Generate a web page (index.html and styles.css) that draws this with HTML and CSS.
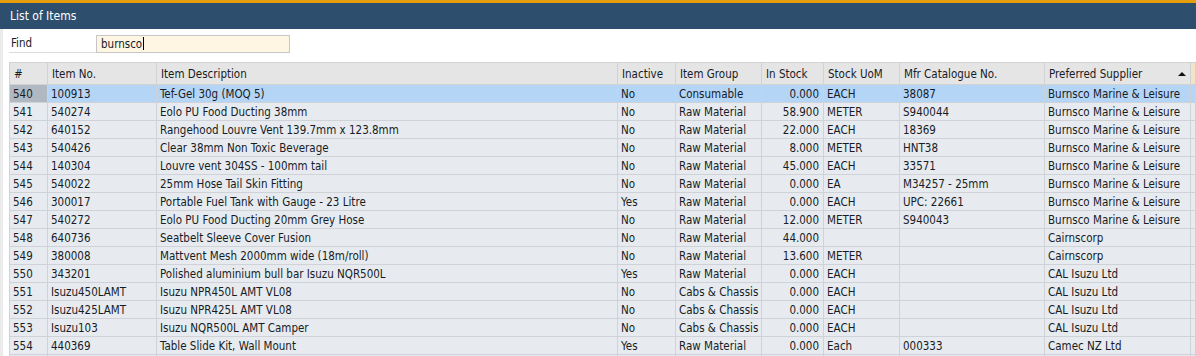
FILE: index.html
```html
<!DOCTYPE html>
<html lang="en">
<head>
    <meta charset="UTF-8">
    <title>List of Items</title>
    <link rel="stylesheet" href="styles.css">
</head>
<body>
    <div class="window">
        <div class="accent"></div>
        <div class="titlebar">List of Items</div>

        <div class="content">
            <div class="find-row">
                <label class="find-label" for="find">Find</label>
                <div class="find-input" id="find">burnsco<span class="caret"></span></div>
            </div>

            <table class="grid">
                <colgroup>
                    <col style="width: 38px">
                    <col style="width: 109px">
                    <col style="width: 461px">
                    <col style="width: 58px">
                    <col style="width: 86px">
                    <col style="width: 62px">
                    <col style="width: 76px">
                    <col style="width: 145px">
                    <col style="width: 146px">
                    <col>
                </colgroup>
                <thead>
                    <tr>
                        <th>#</th>
                        <th>Item No.</th>
                        <th>Item Description</th>
                        <th>Inactive</th>
                        <th>Item Group</th>
                        <th>In Stock</th>
                        <th>Stock UoM</th>
                        <th>Mfr Catalogue No.</th>
                        <th class="sorted">Preferred Supplier<span class="sort-arrow"></span></th>
                        <th class="extra"></th>
                    </tr>
                </thead>
                <tbody>
                    <tr class="selected">
                        <td class="num">540</td><td>100913</td><td>Tef-Gel 30g (MOQ 5)</td><td>No</td><td>Consumable</td><td class="qty">0.000</td><td>EACH</td><td>38087</td><td>Burnsco Marine &amp; Leisure</td><td></td>
                    </tr>
                    <tr>
                        <td class="num">541</td><td>540274</td><td>Eolo PU Food Ducting 38mm</td><td>No</td><td>Raw Material</td><td class="qty">58.900</td><td>METER</td><td>S940044</td><td>Burnsco Marine &amp; Leisure</td><td></td>
                    </tr>
                    <tr>
                        <td class="num">542</td><td>640152</td><td>Rangehood Louvre Vent 139.7mm x 123.8mm</td><td>No</td><td>Raw Material</td><td class="qty">22.000</td><td>EACH</td><td>18369</td><td>Burnsco Marine &amp; Leisure</td><td></td>
                    </tr>
                    <tr>
                        <td class="num">543</td><td>540426</td><td>Clear 38mm Non Toxic Beverage</td><td>No</td><td>Raw Material</td><td class="qty">8.000</td><td>METER</td><td>HNT38</td><td>Burnsco Marine &amp; Leisure</td><td></td>
                    </tr>
                    <tr>
                        <td class="num">544</td><td>140304</td><td>Louvre vent 304SS - 100mm tail</td><td>No</td><td>Raw Material</td><td class="qty">45.000</td><td>EACH</td><td>33571</td><td>Burnsco Marine &amp; Leisure</td><td></td>
                    </tr>
                    <tr>
                        <td class="num">545</td><td>540022</td><td>25mm Hose Tail Skin Fitting</td><td>No</td><td>Raw Material</td><td class="qty">0.000</td><td>EA</td><td>M34257 - 25mm</td><td>Burnsco Marine &amp; Leisure</td><td></td>
                    </tr>
                    <tr>
                        <td class="num">546</td><td>300017</td><td>Portable Fuel Tank with Gauge - 23 Litre</td><td>Yes</td><td>Raw Material</td><td class="qty">0.000</td><td>EACH</td><td>UPC: 22661</td><td>Burnsco Marine &amp; Leisure</td><td></td>
                    </tr>
                    <tr>
                        <td class="num">547</td><td>540272</td><td>Eolo PU Food Ducting 20mm Grey Hose</td><td>No</td><td>Raw Material</td><td class="qty">12.000</td><td>METER</td><td>S940043</td><td>Burnsco Marine &amp; Leisure</td><td></td>
                    </tr>
                    <tr>
                        <td class="num">548</td><td>640736</td><td>Seatbelt Sleeve Cover Fusion</td><td>No</td><td>Raw Material</td><td class="qty">44.000</td><td></td><td></td><td>Cairnscorp</td><td></td>
                    </tr>
                    <tr>
                        <td class="num">549</td><td>380008</td><td>Mattvent Mesh 2000mm wide (18m/roll)</td><td>No</td><td>Raw Material</td><td class="qty">13.600</td><td>METER</td><td></td><td>Cairnscorp</td><td></td>
                    </tr>
                    <tr>
                        <td class="num">550</td><td>343201</td><td>Polished aluminium bull bar Isuzu NQR500L</td><td>Yes</td><td>Raw Material</td><td class="qty">0.000</td><td>EACH</td><td></td><td>CAL Isuzu Ltd</td><td></td>
                    </tr>
                    <tr>
                        <td class="num">551</td><td>Isuzu450LAMT</td><td>Isuzu NPR450L AMT VL08</td><td>No</td><td>Cabs &amp; Chassis</td><td class="qty">0.000</td><td>EACH</td><td></td><td>CAL Isuzu Ltd</td><td></td>
                    </tr>
                    <tr>
                        <td class="num">552</td><td>Isuzu425LAMT</td><td>Isuzu NPR425L AMT VL08</td><td>No</td><td>Cabs &amp; Chassis</td><td class="qty">0.000</td><td>EACH</td><td></td><td>CAL Isuzu Ltd</td><td></td>
                    </tr>
                    <tr>
                        <td class="num">553</td><td>Isuzu103</td><td>Isuzu NQR500L AMT Camper</td><td>No</td><td>Cabs &amp; Chassis</td><td class="qty">0.000</td><td>EACH</td><td></td><td>CAL Isuzu Ltd</td><td></td>
                    </tr>
                    <tr>
                        <td class="num">554</td><td>440369</td><td>Table Slide Kit, Wall Mount</td><td>Yes</td><td>Raw Material</td><td class="qty">0.000</td><td>Each</td><td>000333</td><td>Camec NZ Ltd</td><td></td>
                    </tr>
                    <tr>
                        <td></td><td></td><td></td><td></td><td></td><td></td><td></td><td></td><td></td><td></td>
                    </tr>
                </tbody>
            </table>
        </div>
    </div>
</body>
</html>
```

FILE: styles.css
```css
body {
    margin: 0;
    padding: 0;
    font-family: 'DejaVu Sans Condensed', 'DejaVu Sans', sans-serif;
    font-size: 11.5px;
    color: #161b26;
    background-color: #fff;
    overflow: hidden;
}

.window {
    width: 1196px;
    height: 356px;
    overflow: hidden;
}

.accent {
    height: 3px;
    background-color: #e59f0c;
}

.titlebar {
    height: 26px;
    line-height: 26px;
    padding-left: 10px;
    background-color: #2d4e6d;
    color: #fff;
    font-size: 12px;
}

.content {
    border-left: 3px solid #ebebeb;
    padding: 6px 0 0 6px;
}

.find-row {
    display: flex;
    align-items: center;
    height: 18px;
}

.find-label {
    width: 85px;
    height: 17px;
    line-height: 17px;
    padding-left: 2px;
    border-bottom: 1px solid #dcdcdc;
}

.find-input {
    width: 188px;
    height: 16px;
    line-height: 16px;
    padding-left: 4px;
    border: 1px solid #c6c6c6;
    background-color: #fef5e3;
}

.caret {
    display: inline-block;
    width: 1px;
    height: 13px;
    margin-left: 1px;
    vertical-align: -2px;
    background-color: #000;
}

.grid {
    margin-top: 9px;
    border-collapse: collapse;
    table-layout: fixed;
    width: 1187px;
}

.grid th,
.grid td {
    border: 1px solid #cfd2d6;
    white-space: nowrap;
    overflow: hidden;
    text-align: left;
}

.grid th {
    height: 21px;
    padding: 0 4px;
    font-weight: normal;
    background-color: #e5e5e5;
    border-color: #d2d2d2;
    position: relative;
}

.grid td {
    height: 17px;
    padding: 0 3px;
    background-color: #e7ebef;
}

.grid td.qty {
    text-align: right;
    padding-right: 4px;
}

.grid tr.selected td {
    background-color: #b5d5f7;
}

.grid tr.selected td.num {
    background-color: #b0b8c1;
}

.grid th.extra {
    background-color: #f0e3c8;
}

.sort-arrow {
    position: absolute;
    right: 4px;
    top: 9px;
    width: 0;
    height: 0;
    border-left: 4px solid transparent;
    border-right: 4px solid transparent;
    border-bottom: 4px solid #111;
}
```
